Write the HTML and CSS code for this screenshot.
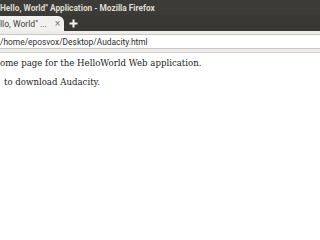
FILE: index.html
```html
<!DOCTYPE html>
<html>
<head>
<meta charset="utf-8">
<link rel="stylesheet" href="styles.css">
</head>
<body>
<div class="window">
  <div class="titlebar"><span class="title">Hello, World" Application - Mozilla Firefox</span></div>
  <div class="tabstrip">
    <div class="tab">
      <span class="tab-label">llo, World" ...</span>
      <span class="tab-close">×</span>
    </div>
    <div class="newtab">
      <svg width="9" height="9" viewBox="0 0 9 9"><path d="M4.5 0.5v8M0.5 4.5h8" stroke="#f4f3f1" stroke-width="2"/></svg>
    </div>
  </div>
  <div class="toolbar">
    <div class="urlbar"><span class="url">/home/eposvox/Desktop/Audacity.html</span></div>
  </div>
  <div class="content">
    <p class="line">ome page for the HelloWorld Web application.</p>
    <p class="line indent">to download Audacity.</p>
  </div>
</div>
</body>
</html>
```
FILE: styles.css
```css
html, body {
  margin: 0;
  padding: 0;
  background: #ffffff;
}
.window {
  width: 320px;
  height: 240px;
  overflow: hidden;
  display: flex;
  flex-direction: column;
}
.titlebar {
  height: 15px;
  background: #3c3b37;
  display: flex;
  align-items: center;
  overflow: hidden;
}
.title {
  font-family: Roboto, sans-serif;
  font-weight: bold;
  font-size: 8.3px;
  color: #dfdbd2;
  white-space: nowrap;
}
.tabstrip {
  height: 16px;
  background: #393834;
  display: flex;
  align-items: flex-end;
}
.tab {
  width: 64px;
  height: 15px;
  background: #f2f1f0;
  border-top-right-radius: 6px;
  display: flex;
  align-items: center;
  padding-right: 3px;
  box-sizing: border-box;
  margin-right: 5px;
}
.tab-label {
  font-family: Roboto, sans-serif;
  font-size: 8.6px;
  color: #3c3c3c;
  white-space: nowrap;
  flex: 1;
}
.tab-close {
  font-family: "DejaVu Sans", sans-serif;
  font-size: 8px;
  color: #666;
}
.newtab {
  height: 15px;
  display: flex;
  align-items: center;
}
.toolbar {
  height: 21px;
  background: #edeceb;
  border-bottom: 1px solid #d5d3cf;
  display: flex;
  align-items: center;
}
.urlbar {
  flex: 1;
  height: 13px;
  background: #ffffff;
  border-top: 1px solid #c9c7c2;
  border-bottom: 1px solid #c9c7c2;
  display: flex;
  align-items: center;
}
.url {
  font-family: Roboto, sans-serif;
  font-size: 8.4px;
  color: #2e2e2e;
  white-space: nowrap;
}
.content {
  flex: 1;
  background: #ffffff;
  padding-top: 4px;
}
.line {
  margin: 0 0 7px 0;
  font-family: "DejaVu Serif", serif;
  font-size: 8.6px;
  line-height: 12px;
  color: #222;
  white-space: nowrap;
}
.indent {
  padding-left: 4px;
}
```
